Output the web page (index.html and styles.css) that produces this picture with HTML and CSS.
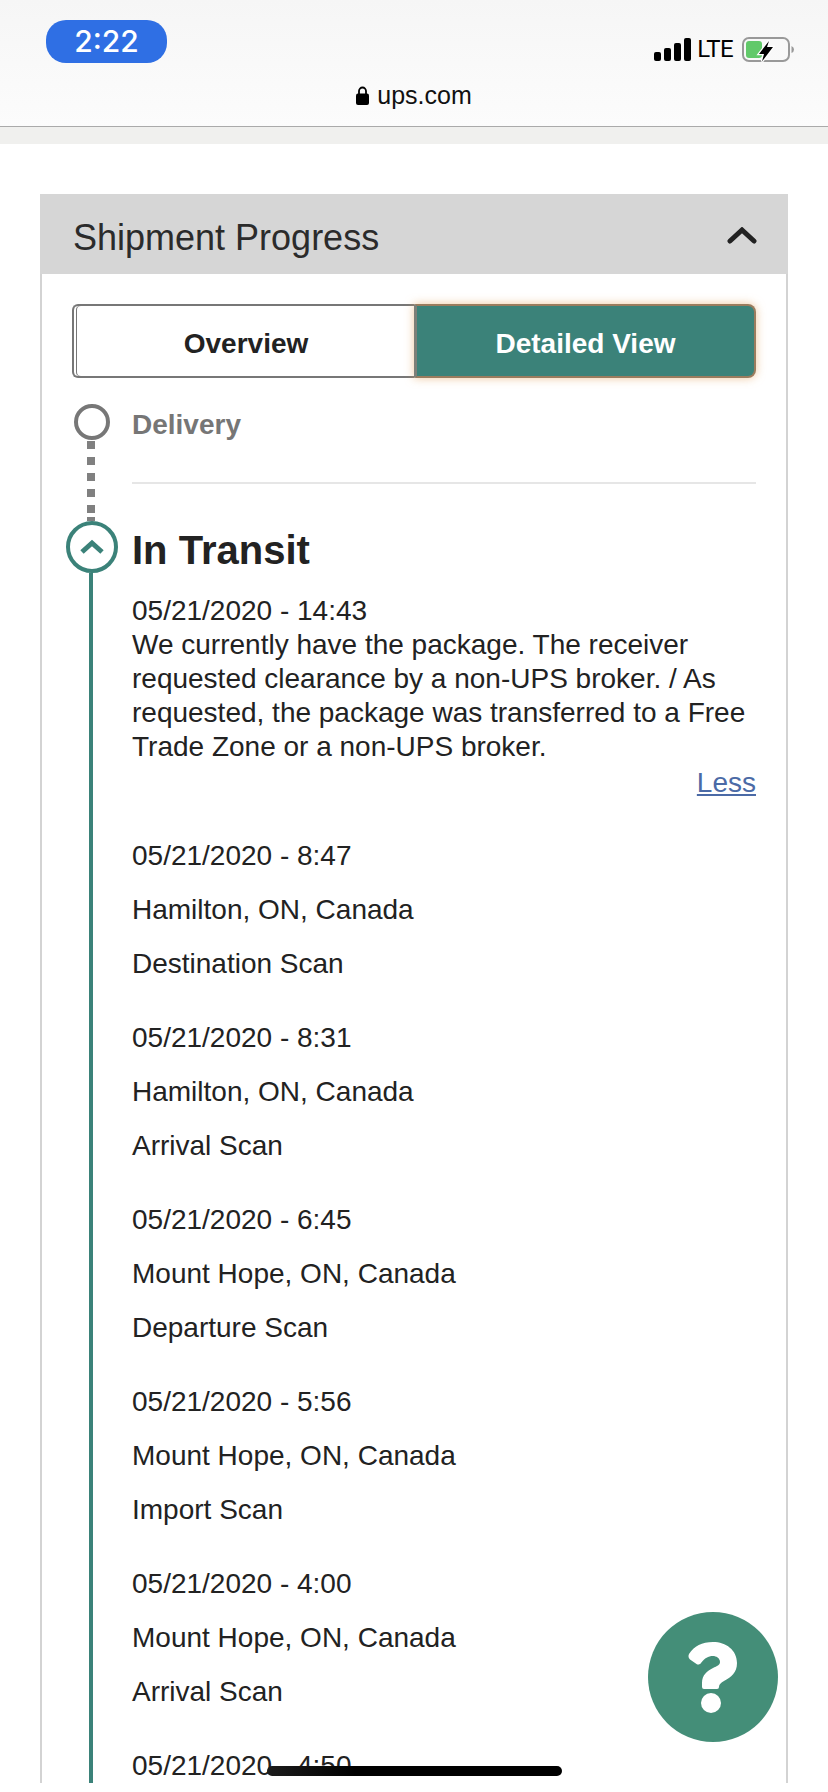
FILE: index.html
```html
<!DOCTYPE html>
<html lang="en">
<head>
<meta charset="utf-8">
<title>UPS Shipment Progress</title>
<link rel="stylesheet" href="styles.css">
</head>
<body>
<div class="screen">
  <header class="browser">
    <div class="status">
      <div class="time">2:22</div>
      <div class="indicators">
        <svg class="signal" viewBox="0 0 37 23" aria-hidden="true">
          <rect x="0" y="14" width="7" height="9" rx="2"/>
          <rect x="10" y="10" width="7" height="13" rx="2"/>
          <rect x="20" y="5" width="7" height="18" rx="2"/>
          <rect x="30" y="0" width="7" height="23" rx="2"/>
        </svg>
        <span class="lte">LTE</span>
        <svg class="battery" viewBox="0 0 52 25" aria-hidden="true">
          <rect x="1" y="1" width="46" height="23" rx="6" fill="none" stroke="#999" stroke-width="2"/>
          <path d="M49.500 9 Q52 10 52 12.500 Q52 15 49.500 16Z" fill="#999"/>
          <rect x="4" y="4" width="16" height="17" rx="3" fill="#62c96a"/>
          <path d="M27 4 17 17h5l-2 7.500L31 10h-6Z" fill="#000" stroke="#fff" stroke-width="2.500" paint-order="stroke"/>
        </svg>
      </div>
    </div>
    <div class="address">
      <svg class="lock" viewBox="0 0 13 19" aria-hidden="true">
        <path d="M3 8V5a3.500 3.500 0 0 1 7 0v3" fill="none" stroke="#000" stroke-width="1.800"/>
        <rect x="0" y="7.500" width="13" height="11.500" rx="2"/>
      </svg>
      <span>ups.com</span>
    </div>
  </header>
  <div class="strip"></div>
  <main class="page">
    <section class="card">
      <div class="card-head">
        <h2>Shipment Progress</h2>
        <svg class="head-chevron" viewBox="0 0 30 17" aria-hidden="true">
          <path d="M3 14 15 3l12 11" fill="none" stroke="#222" stroke-width="5" stroke-linecap="round"/>
        </svg>
      </div>
      <div class="card-body">
        <div class="toggle">
          <div class="tab tab-off">Overview</div>
          <div class="tab tab-on">Detailed View</div>
        </div>
        <div class="step step-next">
          <div class="rail">
            <div class="dot-open"></div>
            <div class="dash"></div>
          </div>
          <div class="step-main">
            <div class="step-label">Delivery</div>
          </div>
        </div>
        <div class="step">
          <div class="rail">
            <div class="dot-current">
              <svg viewBox="0 0 26 16" aria-hidden="true">
                <path d="M3 13 13 4l10 9" fill="none" stroke="#3b8279" stroke-width="5"/>
              </svg>
            </div>
            <div class="solid"></div>
          </div>
          <div class="step-main">
            <h3>In Transit</h3>
            <div class="latest">
              <p>05/21/2020 - 14:43</p>
              <p>We currently have the package. The receiver requested clearance by a non-UPS broker. / As requested, the package was transferred to a Free Trade Zone or a non-UPS broker.</p>
            </div>
            <div class="less"><a href="#">Less</a></div>
            <div class="event"><p>05/21/2020 - 8:47</p><p>Hamilton, ON, Canada</p><p>Destination Scan</p></div>
            <div class="event"><p>05/21/2020 - 8:31</p><p>Hamilton, ON, Canada</p><p>Arrival Scan</p></div>
            <div class="event"><p>05/21/2020 - 6:45</p><p>Mount Hope, ON, Canada</p><p>Departure Scan</p></div>
            <div class="event"><p>05/21/2020 - 5:56</p><p>Mount Hope, ON, Canada</p><p>Import Scan</p></div>
            <div class="event"><p>05/21/2020 - 4:00</p><p>Mount Hope, ON, Canada</p><p>Arrival Scan</p></div>
            <div class="event"><p>05/21/2020 - 4:50</p></div>
          </div>
        </div>
      </div>
    </section>
  </main>
  <button class="help" type="button" aria-label="Help">
    <svg viewBox="0 0 50 71" aria-hidden="true">
      <path d="M1 12C6 4 14 0 25 0c13 0 24 8 24 21 0 10-6 14-13 18-3 2-5 3-5 6q0 2-2 2H16q-2 0-2-2v-4c0-8 5-12 11-15 4-2 7-3 7-6 0-4-4-6-7-6-5 0-8 2-12 7-1 1.500-3 2-4.500 1L2 17.500C.5 16 0 14 1 12Z" fill="#fff"/>
      <circle cx="23" cy="61" r="10" fill="#fff"/>
    </svg>
  </button>
  <div class="home-bar"></div>
</div>
</body>
</html>
```
FILE: styles.css
```css
* { box-sizing: border-box; }
html, body { margin: 0; padding: 0; background: #fff; }
body { font-family: "Liberation Sans", Arial, sans-serif; color: #222; }
.screen { position: relative; width: 828px; height: 1792px; overflow: hidden; }

.browser {
  height: 127px;
  background: linear-gradient(#f6f6f6, #fcfcfc);
  border-bottom: 1px solid #aaa;
}
.status {
  display: flex;
  justify-content: space-between;
  padding: 20px 34px 0 46px;
  height: 81px;
}
.time {
  width: 121px;
  height: 43px;
  border-radius: 20px;
  background: #2f6fe4;
  color: #fff;
  font-family: Inter, sans-serif;
  font-weight: 500;
  font-size: 30px;
  line-height: 43px;
  text-align: center;
}
.indicators { display: flex; align-items: flex-start; padding-top: 17px; }
.signal { width: 37px; height: 23px; fill: #000; margin-top: 1px; }
.lte {
  margin-left: 6px;
  font-family: Roboto, sans-serif;
  font-size: 24px;
  line-height: 24px;
  letter-spacing: -0.6px;
  color: #000;
}
.battery { width: 52px; height: 25px; margin-left: 9px; }
.address {
  display: flex;
  justify-content: center;
  align-items: center;
  gap: 8px;
  font-size: 25px;
  line-height: 28px;
  color: #111;
}
.lock { width: 13px; height: 19px; fill: #000; }

.strip { height: 17px; background: #f0f0ee; }

.page { padding: 50px 40px 0; }
.card { border: solid #d3d3d3; border-width: 0 2px; }
.card-head {
  display: flex;
  justify-content: space-between;
  align-items: center;
  height: 80px;
  margin: 0 -2px;
  padding: 0 31px 0 33px;
  background: #d6d6d6;
}
.card-head h2 { margin: 8px 0 0; font-weight: 400; font-size: 36px; color: #2b2b2b; }
.head-chevron { width: 30px; height: 17px; margin-top: 2px; }
.card-body { padding: 30px 30px 0; }

.toggle { display: flex; height: 74px; }
.tab {
  display: flex;
  justify-content: center;
  align-items: center;
  padding-top: 5px;
  font-weight: 700;
  font-size: 28px;
}
.tab-off {
  flex: 0 0 342px;
  padding-left: 4px;
  border: 2px solid #777;
  border-right: 0;
  border-radius: 6px 0 0 6px;
  box-shadow: inset 2px 0 0 #fff, inset 3px 0 0 #777;
}
.tab-on {
  flex: 1;
  color: #fff;
  background: #3b8279;
  border: 2px solid #9a7c5e;
  border-left: 3px solid #7d7f78;
  border-radius: 0 8px 8px 0;
  box-shadow: 0 0 10px rgba(226, 160, 90, 0.6);
}

.step { display: grid; grid-template-columns: 60px 1fr; }
.step-next { margin-top: 26px; height: 117px; }
.rail { display: flex; flex-direction: column; align-items: center; width: 40px; }
.dot-open {
  flex: none;
  width: 36px;
  height: 36px;
  border: 4px solid #777;
  border-radius: 50%;
}
.dash {
  flex: 1;
  width: 8px;
  margin: 1px 2px 0 0;
  background:
    linear-gradient(#808080, #808080) bottom / 8px 4px no-repeat,
    repeating-linear-gradient(#808080 0 8px, transparent 8px 16px);
}
.step-main { min-width: 0; }
.step-next .step-main { border-bottom: 2px solid #e6e6e6; height: 80px; }
.step-label { font-weight: 700; font-size: 28px; line-height: 42px; color: #767676; }

.dot-current {
  flex: none;
  display: flex;
  justify-content: center;
  align-items: center;
  width: 52px;
  height: 52px;
  margin: 0 -6px;
  border: 4px solid #3b8279;
  border-radius: 50%;
  background: #fff;
}
.dot-current svg { width: 26px; height: 16px; margin-top: -1px; }
.solid { flex: 1; width: 4px; margin-left: -2px; background: #3b8279; }

.step-main h3 { margin: 0; font-size: 40px; line-height: 58px; font-weight: 700; color: #222; }
.step-main p { margin: 0; font-size: 28px; line-height: 34px; color: #222; }
.latest { margin-top: 15px; }
.less { margin-top: 2px; text-align: right; font-size: 28px; line-height: 34px; }
.less a { color: #4b6aa6; text-decoration: underline; }
.event { margin-top: 39px; }
.event p + p { margin-top: 20px; }
.event + .event { margin-top: 40px; }

.help {
  position: absolute;
  left: 648px;
  top: 1612px;
  width: 130px;
  height: 130px;
  padding: 0;
  border: 0;
  border-radius: 50%;
  background: #448e78;
  display: flex;
  justify-content: center;
  align-items: center;
}
.help svg { width: 50px; height: 71px; }
.home-bar {
  position: absolute;
  left: 267px;
  top: 1766px;
  width: 295px;
  height: 10px;
  border-radius: 5px;
  background: linear-gradient(90deg, #1c1c1c, #000 30%);
}
```
